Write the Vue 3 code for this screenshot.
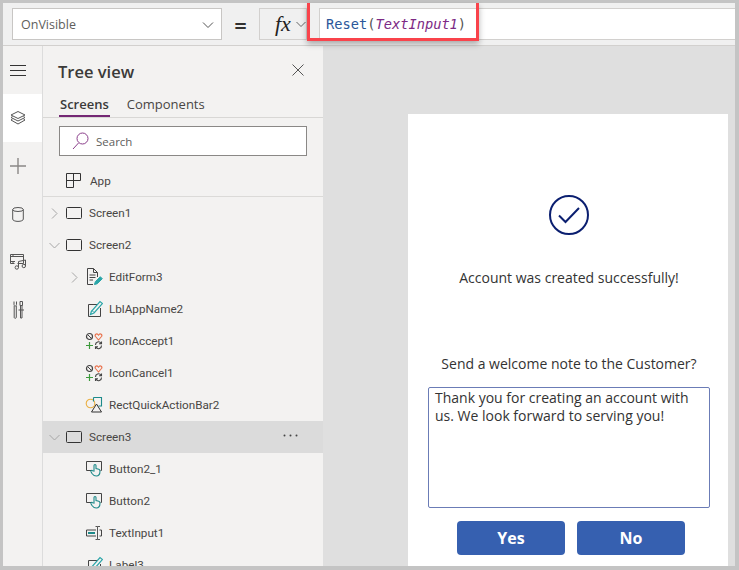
<script setup>
const rows = [
  { name: 'Screen1', icon: 'screen', chev: 'right', level: 0 },
  { name: 'Screen2', icon: 'screen', chev: 'down', level: 0 },
  { name: 'EditForm3', icon: 'form', chev: 'right', level: 1 },
  { name: 'LblAppName2', icon: 'label', level: 1 },
  { name: 'IconAccept1', icon: 'icons', level: 1 },
  { name: 'IconCancel1', icon: 'icons', level: 1 },
  { name: 'RectQuickActionBar2', icon: 'shapes', level: 1 },
  { name: 'Screen3', icon: 'screen', chev: 'down', level: 0, selected: true },
  { name: 'Button2_1', icon: 'button', level: 1 },
  { name: 'Button2', icon: 'button', level: 1 },
  { name: 'TextInput1', icon: 'input', level: 1 },
  { name: 'Label3', icon: 'label', level: 1 }
]
</script>

<template>
  <div class="frame">
    <header class="topbar">
      <div class="prop">
        <span>OnVisible</span>
        <svg width="12" height="8" viewBox="0 0 12 8"><path d="M1 1.500l5 5 5-5" fill="none" stroke="#555" stroke-width="1"/></svg>
      </div>
      <div class="equals">=</div>
      <div class="fx">
        <span class="fx-text">fx</span>
        <svg width="10" height="7" viewBox="0 0 10 7"><path d="M.5 1l4.500 4.500L9.500 1" fill="none" stroke="#666" stroke-width="1"/></svg>
      </div>
      <div class="formula"><span class="fn">Reset</span><span class="par">(</span><span class="arg">TextInput1</span><span class="par">)</span></div>
      <div class="highlight"></div>
    </header>

    <div class="body">
      <nav class="rail">
        <div class="rail-item">
          <svg width="16" height="11" viewBox="0 0 16 11"><path d="M0 .5h16M0 5.500h16M0 10.500h16" stroke="#333" stroke-width="1"/></svg>
        </div>
        <div class="rail-item active">
          <svg width="16" height="14" viewBox="0 0 16 14" fill="none" stroke="#555" stroke-width="1"><path d="M8 .5l7 3.500-7 3.500L1 4z"/><path d="M2.500 5.500L1 6.500 8 10l7-3.500-1.500-1"/><path d="M2.500 8L1 9l7 4 7-4-1.500-1"/></svg>
        </div>
        <div class="rail-item">
          <svg width="16" height="16" viewBox="0 0 16 16"><path d="M8 0v16M0 8h16" stroke="#8a8886" stroke-width="1.400"/></svg>
        </div>
        <div class="rail-item">
          <svg width="12" height="15" viewBox="0 0 12 15" fill="none" stroke="#555" stroke-width="1"><ellipse cx="6" cy="2.500" rx="5.300" ry="2"/><path d="M.7 2.500v9.700c0 1.200 2.400 2.200 5.300 2.200s5.300-1 5.300-2.200V2.500"/></svg>
        </div>
        <div class="rail-item">
          <svg width="17" height="16" viewBox="0 0 17 16" fill="none" stroke="#555" stroke-width="1"><path d="M.5.500h13v9H7.500M.5.500v9h4M3 .5v2M.5 2.500H13.500M3 7.500v2M.5 7.500H5"/><path d="M8.500 13.500V7.500l7-1.500v6"/><circle cx="6.800" cy="13.500" r="1.700"/><circle cx="13.800" cy="12" r="1.700"/></svg>
        </div>
        <div class="rail-item">
          <svg width="11" height="18" viewBox="0 0 11 18" fill="none" stroke="#555" stroke-width="1"><path d="M1 .5v3c0 .8.500 1.500 1 1.500h.5c.5 0 1-.7 1-1.500v-3M1.200 5v11.500c0 1 2.100 1 2.100 0V5"/><path d="M7 .5h2.500v4H7zM7.500 4.500v12.500h1.500V4.500M5.500 9h5.500"/></svg>
        </div>
      </nav>

      <aside class="tree">
        <div class="tree-head">
          <h1>Tree view</h1>
          <svg class="close" width="12" height="12" viewBox="0 0 12 12"><path d="M.5.500l11 11M11.500.500l-11 11" stroke="#555" stroke-width="1"/></svg>
        </div>
        <div class="tabs">
          <span class="tab on">Screens</span>
          <span class="tab">Components</span>
        </div>
        <div class="search">
          <svg width="17" height="18" viewBox="0 0 17 18" fill="none" stroke="#8a3d8a" stroke-width="1"><circle cx="10.500" cy="6.500" r="5.500"/><path d="M6.500 11L1 17"/></svg>
          <span>Search</span>
        </div>
        <div class="app-row">
          <svg width="15" height="15" viewBox="0 0 15 15" fill="none" stroke="#333" stroke-width="1"><path d="M7.500 14.500H.5V.5h14v7H.5M7.500.5v14"/></svg>
          <span>App</span>
        </div>
        <div class="list">
          <div v-for="row in rows" :key="row.name" class="row" :class="[`lvl${row.level}`, { sel: row.selected }]">
            <span class="chev">
              <svg v-if="row.chev === 'right'" width="7" height="11" viewBox="0 0 7 11"><path d="M1 .5l5 5-5 5" fill="none" stroke="#a6a6a6" stroke-width="1"/></svg>
              <svg v-else-if="row.chev === 'down'" width="11" height="7" viewBox="0 0 11 7"><path d="M.5 1l5 5 5-5" fill="none" stroke="#a6a6a6" stroke-width="1"/></svg>
            </span>
            <span class="ico">
              <svg v-if="row.icon === 'screen'" width="16" height="12" viewBox="0 0 16 12"><rect x=".5" y=".5" width="15" height="11" rx="1" fill="none" stroke="#333"/></svg>
              <svg v-else viewBox="0 0 18 18" width="18" height="18" fill="none">
                <g v-if="row.icon === 'form'">
                  <path d="M8 16.500H2.500V.5h6l4 4v4.500M8.500.5v4h4M4.500 7h6M4.500 9.500h6M4.500 12h3.500" stroke="#444"/>
                  <path d="M9.500 16.500l.8-2.800 5-5 2 2-5 5z" fill="#2aa5a8" stroke="#2aa5a8"/>
                </g>
                <g v-else-if="row.icon === 'label'">
                  <path d="M12 4.500H3.500v12h12v-8.500" stroke="#444"/>
                  <path d="M5.500 14.500l.8-3L15 1.500l2.500 2L9 13z" stroke="#2aa5a8" stroke-width="1.200"/>
                  <path d="M7 10.500l2 2" stroke="#2aa5a8"/>
                </g>
                <g v-else-if="row.icon === 'icons'">
                  <circle cx="4.500" cy="4.500" r="3" stroke="#444" stroke-width="1.200"/><path d="M2.500 2.500l4 4" stroke="#444"/>
                  <path d="M13.500 8l-3-3.500c-1.300-1.800 1.300-3.500 2.300-2.200l.7.800.7-.8c1-1.300 3.600.4 2.300 2.200z" stroke="#e8704a" stroke-width="1.100"/>
                  <path d="M4.500 10v7M1 13.500h7" stroke="#3c9a3c" stroke-width="1.200"/>
                  <path d="M10.500 13a3 3 0 0 1 5.500-1.800M16.500 13.500a3 3 0 0 1-5.500 1.800M16.500 9.500v2.200h-2.500M10.500 17v-2.200h2.500" stroke="#444" stroke-width="1.100"/>
                </g>
                <g v-else-if="row.icon === 'shapes'">
                  <circle cx="5.500" cy="7.500" r="4.300" stroke="#eab044" stroke-width="1.100"/>
                  <path d="M8.500 1.500h8v8.500h-3M8.500 1.500v4" stroke="#1d8a8a" stroke-width="1.100"/>
                  <path d="M6.500 16l5-8 5 8z" stroke="#333" fill="#f3f2f1"/>
                </g>
                <g v-else-if="row.icon === 'button'">
                  <path d="M6 10.500H1.500v-9h15v9h-1" stroke="#444"/>
                  <path d="M9 11V5.500c0-1.300 2-1.300 2 0V8.500l2.800.8c1 .3 1.200 1.200 1.200 2 0 2.800-1.500 4.700-3.800 4.700S8 15 7 13.500l-1-1.800c-.5-1 .9-1.800 1.500-1z" stroke="#1d8a8a" stroke-width="1.100" fill="#f3f2f1"/>
                </g>
                <g v-else-if="row.icon === 'input'">
                  <path d="M11 6H1.500v6H11M14.500 6h2v6h-2" stroke="#444"/>
                  <rect x="3" y="8" width="7" height="2" fill="#1d8a8a"/>
                  <path d="M10.500 2.500h2v13h-2M15 2.500h-2.500M15 15.500h-2.500" stroke="#555"/>
                </g>
              </svg>
            </span>
            <span class="name">{{ row.name }}</span>
            <svg v-if="row.selected" class="more" width="15" height="3" viewBox="0 0 15 3"><circle cx="1.500" cy="1.500" r="1" fill="#444"/><circle cx="7.500" cy="1.500" r="1" fill="#444"/><circle cx="13.500" cy="1.500" r="1" fill="#444"/></svg>
          </div>
        </div>
      </aside>

      <main class="canvas">
        <section class="screen">
          <svg class="check" width="42" height="42" viewBox="0 0 42 42" fill="none" stroke="#0b1f70" stroke-width="2"><circle cx="21" cy="21" r="19"/><path d="M11 21.500l6.500 6.500L31 14"/></svg>
          <p class="msg created">Account was created successfully!</p>
          <p class="msg ask">Send a welcome note to the Customer?</p>
          <div class="note">Thank you for creating an account with us. We look forward to serving you!</div>
          <div class="actions">
            <button class="btn">Yes</button>
            <button class="btn">No</button>
          </div>
        </section>
      </main>
    </div>
  </div>
</template>

<style>
html, body { margin: 0; overflow: hidden; }
</style>

<style scoped>
.frame {
  width: 739px;
  height: 570px;
  box-sizing: border-box;
  padding: 3px 4px 4px 3px;
  background: #c4c4c4;
  display: flex;
  flex-direction: column;
  font-family: "Open Sans", sans-serif;
  color: #3b3a39;
  overflow: hidden;
}
.topbar {
  height: 43px;
  flex: none;
  box-sizing: border-box;
  border-bottom: 1px solid #d2d0ce;
  background: #f0f0f0;
  position: relative;
  display: flex;
  padding: 5px 0 0 9px;
  align-items: flex-start;
}
.prop {
  width: 210px;
  height: 32px;
  box-sizing: border-box;
  border: 1px solid #c8c6c4;
  background: #fff;
  display: flex;
  align-items: center;
  justify-content: space-between;
  padding: 1px 7px 0 8px;
  font-size: 12.500px;
  color: #605e5c;
}
.equals {
  width: 37px;
  height: 32px;
  text-align: center;
  font-size: 22px;
  line-height: 34px;
  font-weight: 600;
  color: #323130;
}
.fx {
  width: 48px;
  height: 32px;
  box-sizing: border-box;
  border: 1px solid #d2d0ce;
  display: flex;
  align-items: center;
  gap: 5px;
  padding-left: 15px;
}
.fx-text {
  font-family: "Liberation Serif", serif;
  font-style: italic;
  font-size: 22px;
  line-height: 24px;
  color: #222;
}
.formula {
  margin-left: 12px;
  flex: 1;
  height: 32px;
  box-sizing: border-box;
  background: #fff;
  border-top: 1px solid #d2d0ce;
  border-bottom: 1px solid #d2d0ce;
  border-left: 1px solid #d2d0ce;
  padding-left: 6px;
  font-family: "DejaVu Sans Mono", monospace;
  font-size: 13.700px;
  line-height: 31px;
}
.fn { color: #2b579a; }
.par { color: #555; }
.arg { color: #7d2a85; font-style: italic; }
.highlight {
  position: absolute;
  left: 304px;
  top: 0;
  width: 172px;
  height: 38px;
  box-sizing: border-box;
  border: 3px solid #f9434b;
  border-top: none;
  box-shadow: 0 3px 6px rgba(0, 0, 0, 0.3);
}
.body { flex: 1; display: flex; min-height: 0; }
.rail {
  width: 40px;
  flex: none;
  box-sizing: border-box;
  border-right: 1px solid #dcdcdc;
  background: #f3f2f1;
}
.rail-item {
  height: 48px;
  box-sizing: border-box;
  padding-right: 9px;
  display: flex;
  align-items: center;
  justify-content: center;
}
.rail-item.active { background: #fff; }
.tree {
  width: 280px;
  flex: none;
  background: #f3f2f1;
  overflow: hidden;
}
.tree-head {
  height: 51px;
  box-sizing: border-box;
  display: flex;
  align-items: center;
  justify-content: space-between;
  padding: 8px 19px 9px 15px;
}
.tree-head h1 {
  margin: 0;
  font-size: 16.500px;
  font-weight: 600;
  color: #3b3a39;
}
.close { margin-top: -3px; }
.tabs {
  height: 20px;
  padding: 0 0 0 16px;
  display: flex;
  gap: 16px;
  border-bottom: 1px solid #d8d7d5;
  font-size: 13px;
}
.tab { position: relative; height: 22px; padding: 0 1px; margin-top: -2px; line-height: 18px; color: #484644; }
.tab.on { font-weight: 600; color: #3b3a39; }
.tab.on::after {
  content: "";
  position: absolute;
  left: 0;
  right: 0;
  bottom: 0;
  height: 2px;
  background: #742774;
}
.search {
  margin: 8px 16px 0;
  height: 30px;
  box-sizing: border-box;
  border: 1px solid #8a8886;
  background: #fff;
  display: flex;
  align-items: center;
  gap: 7px;
  padding-left: 12px;
  font-size: 11.500px;
  color: #605e5c;
}
.app-row {
  height: 41px;
  box-sizing: border-box;
  padding: 9px 0 0 23px;
  display: flex;
  align-items: center;
  gap: 9px;
  border-bottom: 1px solid #dbdad8;
  font-family: Roboto, sans-serif;
  font-size: 11.700px;
  color: #484644;
}
.row {
  height: 32px;
  display: flex;
  align-items: center;
  position: relative;
  font-family: Roboto, sans-serif;
  font-size: 11.700px;
  color: #484644;
  white-space: nowrap;
}
.row.sel { background: #dbdbdb; }
.chev { width: 12px; height: 12px; margin-right: 5px; display: flex; align-items: center; justify-content: center; flex: none; }
.ico { width: 18px; height: 18px; margin-right: 6px; display: flex; align-items: center; justify-content: center; flex: none; }
.ico svg { display: block; }
.lvl0 { padding-left: 5px; }
.lvl1 { padding-left: 25px; }
.more {
  position: absolute;
  right: 25px;
  top: 13px;
}
.canvas {
  flex: 1;
  min-width: 0;
  background: #dfdfdf;
  padding: 68px 7px 0 85px;
}
.screen {
  width: 320px;
  height: 452px;
  box-sizing: border-box;
  padding-left: 2px;
  background: #fff;
  display: flex;
  flex-direction: column;
  align-items: center;
  overflow: hidden;
}
.check { margin-top: 80px; flex: none; }
.msg { margin: 0; font-size: 14px; line-height: 20px; color: #333; white-space: nowrap; }
.created { margin-top: 32px; }
.ask { margin-top: 66px; }
.note {
  margin-top: 13px;
  width: 282px;
  height: 121px;
  flex: none;
  box-sizing: border-box;
  border: 1.500px solid #6b7cb6;
  border-radius: 2px;
  padding: 1px 6px;
  font-size: 14px;
  line-height: 18px;
  color: #333;
}
.actions { margin-top: 13px; margin-left: 4px; display: flex; gap: 12px; flex: none; }
.btn {
  width: 108px;
  height: 34px;
  border: none;
  border-radius: 4px;
  background: #3660b0;
  color: #fff;
  font-family: "Open Sans", sans-serif;
  font-size: 16px;
  font-weight: 700;
  padding: 0;
}
</style>
